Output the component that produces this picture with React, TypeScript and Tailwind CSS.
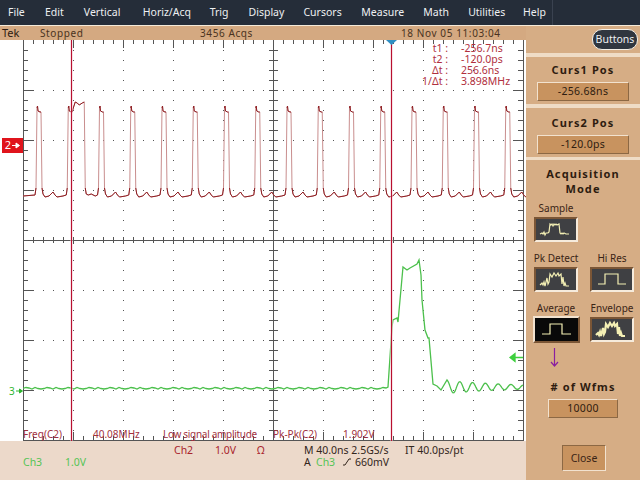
const menus = [
  { label: "File", width: "w-[37px]" },
  { label: "Edit", width: "w-[39px]" },
  { label: "Vertical", width: "w-[59px]" },
  { label: "Horiz/Acq", width: "w-[67px]" },
  { label: "Trig", width: "w-[39px]" },
  { label: "Display", width: "w-[55px]" },
  { label: "Cursors", width: "w-[58px]" },
  { label: "Measure", width: "w-[62px]" },
  { label: "Math", width: "w-[45px]" },
  { label: "Utilities", width: "w-[55px]" },
  { label: "Help", width: "w-[29px]" },
];

const range = (from: number, to: number, step: number) => {
  const out: number[] = [];
  for (let v = from; v <= to; v += step) out.push(v);
  return out;
};

// plot coordinates: 0,0 is the top left of the graticule, 500x400
const PULSE_START = 14;
const PERIOD = 31.25;

const redEdges = () => {
  let pts: number[][] = [[0, 156]];
  range(0, 15, 1).forEach((n) => {
    const x = PULSE_START + n * PERIOD;
    pts = pts.concat([
      [x - 2, 155], [x - 1, 148], [x, 68], [x + 0.5, 66], [x + 1, 71], [x + 3, 72], [x + 4, 72],
    ]);
    if (n === 1) {
      pts = pts.concat([[x + 5, 68], [x + 7, 62], [x + 9, 63], [x + 11, 65], [x + 14, 63], [x + 16, 62], [x + 17, 148], [x + 18, 154], [x + 20, 155], [x + 23, 154], [x + 27, 156]]);
    } else {
      pts = pts.concat([[x + 5, 148], [x + 6, 154], [x + 8, 157], [x + 12, 156], [x + 14, 154], [x + 16, 152], [x + 18, 155], [x + 20, 157], [x + 26, 156]]);
    }
  });
  return pts;
};

const greenTrace = () => {
  const pts: number[][] = [];
  range(0, 364, 3).forEach((x, i) => pts.push([x, 348 + [0.5, -0.5, 0, 1, -0.5, 0.5, 1][i % 7]]));
  pts.push([365, 347], [369, 287], [370, 280], [374, 278], [375, 282], [380, 227], [384, 230], [387, 228], [394, 224], [396, 220], [398, 235], [399, 260], [402, 290], [405, 298], [406, 298], [410, 344], [414, 346], [418, 350], [424, 340]);
  // ringing after the falling edge
  range(425, 500, 1).forEach((x) => {
    pts.push([x, 347 - 6.5 * Math.exp(-(x - 424) / 70) * Math.cos((2 * Math.PI * (x - 424)) / 12.8)]);
  });
  return pts;
};

const toPoints = (pts: number[][]) => pts.map((p) => p.join(",")).join(" ");

const Graticule = () => (
  <g>
    {range(10, 490, 10).flatMap((x) =>
      [50, 100, 150, 250, 300, 350].map((y) => <rect key={`h${x}-${y}`} x={x} y={y} width="1" height="1" fill="#555" />),
    )}
    {range(50, 450, 50).flatMap((x) =>
      range(10, 390, 10).map((y) => (x === 250 ? null : <rect key={`v${x}-${y}`} x={x} y={y} width="1" height="1" fill="#555" />)),
    )}
    {range(10, 490, 10).map((x) => (
      <g key={`t${x}`} stroke="#555">
        <line x1={x + 0.5} y1="0" x2={x + 0.5} y2={x % 50 === 0 ? 8 : 4} />
        <line x1={x + 0.5} y1="400" x2={x + 0.5} y2={x % 50 === 0 ? 392 : 396} />
        <line x1={x + 0.5} y1="197" x2={x + 0.5} y2={x % 50 === 0 ? 204 : 203} />
      </g>
    ))}
    {range(10, 390, 10).map((y) => (
      <g key={`l${y}`} stroke="#555">
        <line x1="0" y1={y + 0.5} x2={y % 50 === 0 ? 10 : 5} y2={y + 0.5} />
        <line x1="500" y1={y + 0.5} x2={y % 50 === 0 ? 490 : 495} y2={y + 0.5} />
        <line x1="246" y1={y + 0.5} x2="255" y2={y + 0.5} />
      </g>
    ))}
    <line x1="0.5" y1="0" x2="0.5" y2="401" stroke="#555" />
    <line x1="500.5" y1="0" x2="500.5" y2="401" stroke="#555" />
    <line x1="250.5" y1="0" x2="250.5" y2="401" stroke="#555" />
    <line x1="0" y1="200.5" x2="500" y2="200.5" stroke="#555" />
    <line x1="0" y1="400.5" x2="500" y2="400.5" stroke="#555" />
  </g>
);

const Plot = () => {
  const red = redEdges();
  return (
    <svg width="503" height="401" viewBox="0 0 503 401" className="block">
      <Graticule />
      <polyline points={toPoints(red)} fill="none" stroke="#c98e8e" strokeWidth="1" />
      {red.map((p, i) =>
        i > 0 && Math.abs(p[1] - red[i - 1][1]) < 9 ? (
          <line key={i} x1={red[i - 1][0]} y1={red[i - 1][1]} x2={p[0]} y2={p[1]} stroke="#8f1f24" strokeWidth="1" />
        ) : null,
      )}
      <polyline points={toPoints(greenTrace())} fill="none" stroke="#4cc04c" strokeWidth="1.3" />
      {[48.5, 368.5].map((x) => (
        <g key={x}>
          <line x1={x} y1="0" x2={x} y2="401" stroke="#f0c8d0" strokeWidth="2" />
          <line x1={x} y1="0" x2={x} y2="401" stroke="#b81030" strokeWidth="1" />
        </g>
      ))}
      <polygon points="363,0 374,0 368.5,5" fill="#2f8fc4" />
      <path d="M487 317.5H500M487 317.5l5-4v8z" stroke="#3fd03f" strokeWidth="1.3" fill="#3fd03f" />
    </svg>
  );
};

const wavePaths: Record<string, string> = {
  sample: "M6 17l2-1 1 1 1-2 1 3 1-2 2 0 1-1 1-8 1 1 1-1 1 2 1-2 1 1 1-1 1 1 2-1 1 9 1 1 1-1 1 1 1-1 2 1 3 0",
  pk: "M6 18l2-2 1 2 1-3 1 4 2-8 1 6 1-2 1-8 2 3 2-4 2 3 2-3 1 3 2-2 1 10 1-7 1 9 1-3 1 3 3 0",
  flat: "M8 17h7V7h13v10h8",
  flatOn: "M8 18h8V8h12v10h9",
};

const Wave = ({ kind }: { kind: string }) => (
  <svg width="40" height={kind === "flatOn" ? 23 : 21} viewBox={kind === "flatOn" ? "2 2 40 23" : "2 2 40 21"} className="block">
    <path d={wavePaths[kind === "env" ? "pk" : kind]} fill="none" stroke="#f3efb4" strokeWidth={kind === "env" ? 2.2 : 1.2} />
  </svg>
);

const ModeButton = ({ label, kind, on }: { label: string; kind: string; on?: boolean }) => (
  <div className="flex w-[44px] flex-col items-center">
    <span className="whitespace-nowrap text-[10px] leading-[13px] text-[#3a2416]">{label}</span>
    <div
      className={
        on
          ? "mt-[1px] w-[47px] shrink-0 border-2 border-t-[#f2e2cf] border-l-[#f2e2cf] border-r-[#7b5636] border-b-[#7b5636] bg-[#090909] pl-[1.5px]"
          : "mt-[2px] w-[44px] shrink-0 border-2 border-t-[#7b5636] border-l-[#7b5636] border-r-[#f6ebdc] border-b-[#f6ebdc] bg-[#3f4043]"
      }
    >
      <Wave kind={kind} />
    </div>
  </div>
);

const ValueBox = ({ value, width }: { value: string; width: string }) => (
  <div className={`${width} mx-auto h-[19px] border border-t-[#f2e2cf] border-l-[#f2e2cf] border-r-[#8c6844] border-b-[#8c6844] bg-[#c8935f] text-center text-[10.5px] leading-[17px] tracking-[0.3px] text-[#2e1c10]`}>
    {value}
  </div>
);

const PanelTitle = ({ children }: { children: React.ReactNode }) => (
  <div className="mb-[5px] text-center text-[11px] leading-[14px] font-bold tracking-[1.1px]">{children}</div>
);

const readouts = [
  ["t1 :", "-256.7ns"],
  ["t2 :", "-120.0ps"],
  ["Δt :", "256.6ns"],
  ["1/Δt :", "3.898MHz"],
];

export default function App() {
  return (
    <div className="flex h-[480px] w-[640px] flex-col overflow-hidden bg-white font-[family-name:'Liberation_Sans',Arial,sans-serif]">
      <nav className="flex h-[25px] shrink-0 bg-[#252d39] text-[10.5px] text-[#eef0f2]">
        <div className="flex h-full w-[553px] items-center border-r border-[#3a4250] pl-[8px]">
          {menus.map((m) => (
            <span key={m.label} className={m.width}>
              {m.label}
            </span>
          ))}
        </div>
      </nav>
      <div className="h-px shrink-0 bg-[#f5ead9]" />
      <div className="flex min-h-0 flex-1">
        <div className="flex w-[526px] flex-col">
          <div className="flex h-[14px] bg-[#d4a981] text-[10px] leading-[14px] tracking-[0.6px] text-[#4a3320]">
            <span className="ml-[2px] w-[38px] text-[11px] tracking-normal text-[#2e1c10]">Tek</span>
            <span className="w-[160px]">Stopped</span>
            <span className="w-[201px]">3456 Acqs</span>
            <span>18 Nov 05 11:03:04</span>
          </div>
          <div className="flex h-[401px]">
            <div className="relative w-[23px] shrink-0 bg-white">
              <div className="absolute left-[2px] top-[98px] flex h-[15px] w-[21px] items-center justify-center bg-[#e0141c] text-[11px] text-white">
                2
                <svg width="8" height="7" viewBox="0 0 8 7" className="ml-[1px]">
                  <path d="M0 3.5H7M7.5 3.5L4 1v5z" stroke="#fff" fill="#fff" />
                </svg>
              </div>
              <div className="absolute left-[9px] top-[346px] flex items-center text-[10px] leading-[10px] text-[#2fb52f]">
                3
                <svg width="7" height="6" viewBox="0 0 7 6" className="ml-[1px]">
                  <path d="M0 3H6M6.5 3L3.5 1v4z" stroke="#2fb52f" fill="#2fb52f" />
                </svg>
              </div>
            </div>
            <div className="relative w-[503px] shrink-0">
              <Plot />
              <div className="absolute left-[380px] top-[3px] text-[10.5px] leading-[11px] text-[#b0303e]">
                {readouts.map(([k, v]) => (
                  <div key={k} className="flex h-[11px] whitespace-nowrap">
                    <span className="w-[45px] text-right">{k}</span>
                    <span className="ml-[13px]">{v}</span>
                  </div>
                ))}
              </div>
              <div className="absolute bottom-0 left-0 flex text-[10px] leading-[13px] text-[#a0303e]">
                <span className="w-[70px]">Freq(C2)</span>
                <span className="w-[70px]">40.08MHz</span>
                <span className="w-[110px] whitespace-nowrap tracking-[-0.3px]">Low signal amplitude</span>
                <span className="w-[70px]">Pk-Pk(C2)</span>
                <span>1.902V</span>
              </div>
            </div>
          </div>
          <div className="flex-1 bg-[#ecd9ca] text-[10.5px] leading-[12px]">
            <div className="flex pt-[3px] text-[#a8242c]">
              <span className="ml-[174px] w-[41px]">Ch2</span>
              <span className="w-[42px]">1.0V</span>
              <span className="w-[47px]">Ω</span>
              <span className="w-[101px] whitespace-nowrap text-[#33261c]">M 40.0ns 2.5GS/s</span>
              <span className="whitespace-nowrap text-[#33261c]">IT 40.0ps/pt</span>
            </div>
            <div className="flex items-center text-[#55c455]">
              <span className="ml-[23px] w-[42px]">Ch3</span>
              <span className="w-[239px]">1.0V</span>
              <span className="w-[12px] text-[#33261c]">A</span>
              <span className="w-[26px]">Ch3</span>
              <svg width="13" height="10" viewBox="0 0 13 10">
                <path d="M1 8h2l4-6h2" fill="none" stroke="#33261c" strokeWidth="1" />
              </svg>
              <span className="text-[#33261c]">660mV</span>
            </div>
          </div>
        </div>
        <aside className="flex w-[114px] flex-col bg-[#d6ad85] text-[#2e1c10]">
          <div className="flex h-[27px] shrink-0 items-start justify-end pr-[2px] pt-[3px]">
            <div className="flex h-[21px] w-[46px] items-center justify-center rounded-[10px] border border-[#f4f0e8] bg-[#30363f] text-[10.5px] text-[#eef0f2]">
              Buttons
            </div>
          </div>
          <div className="h-[4px] shrink-0 bg-[#efdcc6]" />
          <section className="h-[47px] shrink-0 pt-[6px]">
            <PanelTitle>Curs1 Pos</PanelTitle>
            <ValueBox value="-256.68ns" width="w-[92px]" />
          </section>
          <div className="h-[4px] shrink-0 bg-[#efdcc6]" />
          <section className="h-[49px] shrink-0 pt-[8px]">
            <PanelTitle>Curs2 Pos</PanelTitle>
            <ValueBox value="-120.0ps" width="w-[92px]" />
          </section>
          <div className="h-[3px] shrink-0 bg-[#efdcc6]" />
          <section className="flex flex-1 flex-col pt-[6px]">
            <div className="text-center text-[11px] leading-[15px] font-bold tracking-[1.1px]">
              Acquisition
              <br />
              Mode
            </div>
            <div className="mt-[6px] pl-[8px]">
              <ModeButton label="Sample" kind="sample" />
            </div>
            <div className="mt-[10px] flex gap-[12px] pl-[8px]">
              <ModeButton label="Pk Detect" kind="pk" />
              <ModeButton label="Hi Res" kind="flat" />
            </div>
            <div className="mt-[10px] flex gap-[12px] pl-[8px]">
              <ModeButton label="Average" kind="flatOn" on />
              <ModeButton label="Envelope" kind="env" />
            </div>
            <svg width="114" height="22" viewBox="0 0 114 22" className="mt-[4px] block">
              <path d="M28.5 1v18M25 15l3.5 4 3.5-4" fill="none" stroke="#8a1fa0" strokeWidth="1.2" />
            </svg>
            <div className="mt-[11px]">
              <PanelTitle># of Wfms</PanelTitle>
            </div>
            <ValueBox value="10000" width="w-[70px]" />
            <div className="mt-[27px] ml-[36px] h-[26px] w-[44px] border border-t-[#8c6844] border-l-[#8c6844] border-r-[#f2e2cf] border-b-[#f2e2cf] bg-[#c8935f] text-center text-[10.5px] leading-[24px] text-[#3a2416]">
              Close
            </div>
          </section>
        </aside>
      </div>
    </div>
  );
}
